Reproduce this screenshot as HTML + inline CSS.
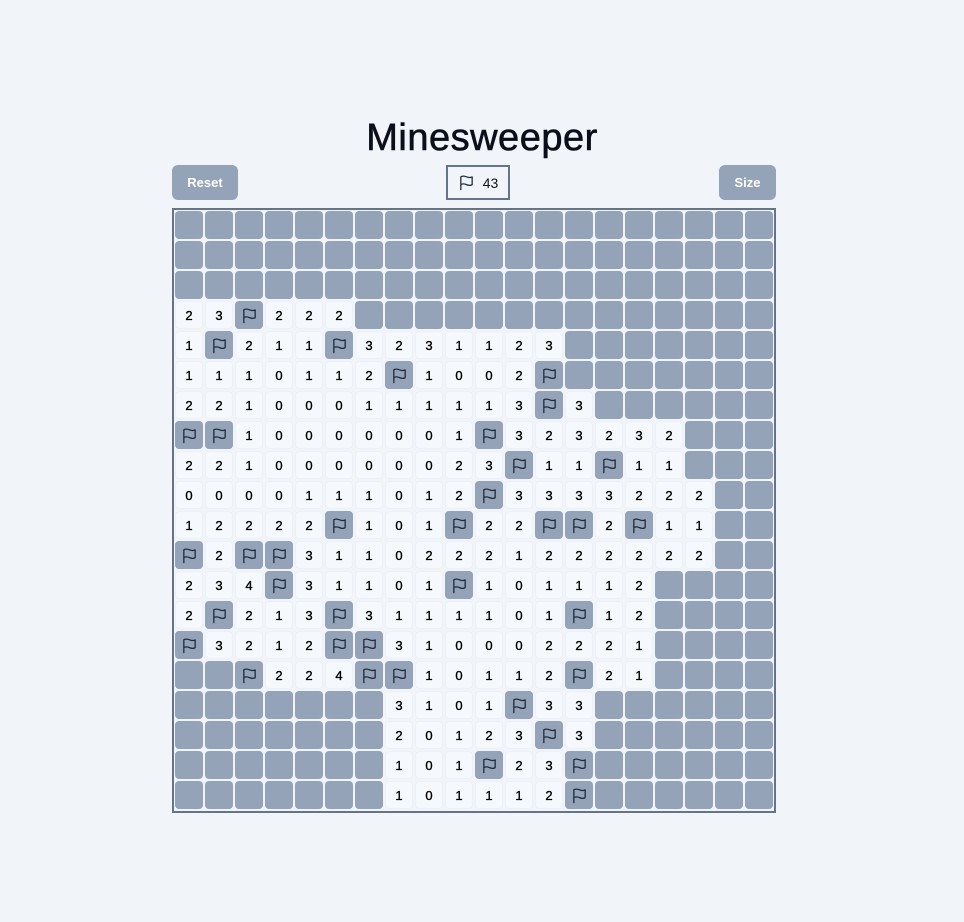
<!DOCTYPE html>
<html><head><meta charset="utf-8"><style>
body{margin:0;background:#f1f5fa;font-family:"Liberation Sans",sans-serif;width:964px;height:922px;position:relative}
h1{position:absolute;top:117px;left:0;width:964px;text-align:center;margin:0;font-size:38px;font-weight:normal;color:#0b0f19;letter-spacing:0.5px;-webkit-text-stroke:0.6px #0b0f19}
.btn{position:absolute;top:165px;height:35px;background:#94a3b8;color:#fff;border-radius:6px;font-size:13px;font-weight:bold;line-height:35px;text-align:center}
.cnt{position:absolute;left:446px;top:165px;width:60px;height:31px;border:2px solid #64748b;display:flex;align-items:center;justify-content:center;gap:8px;font-size:14px;color:#111}
.g{position:absolute;left:172px;top:208px;width:599px;height:600px;border:2px solid #64748b;padding:1px 0 0 1px;display:grid;grid-template-columns:repeat(20,28px);grid-auto-rows:28px;gap:2px}
.g i{background:#94a3b8;border-radius:4px;display:flex;align-items:center;justify-content:center}
.g b{background:#f5f8fc;border-radius:4px;font-weight:normal;font-size:13px;color:#000;-webkit-text-stroke:0.35px #000;display:flex;align-items:center;justify-content:center;box-shadow:inset 0 0 0 1px #edf1f7}
svg{width:17px;height:17px}
</style></head><body>
<svg style="display:none"><symbol id="fl" viewBox="0 0 24 24"><path d="M4 15s1-1 4-1 5 2 8 2 4-1 4-1V4s-1 1-4 1-5-2-8-2-4 1-4 1z M4 22V4" fill="none" stroke="#1e293b" stroke-width="1.8" stroke-linejoin="round" stroke-linecap="round"/></symbol></svg>
<h1>Minesweeper</h1>
<div class="btn" style="left:172px;width:66px">Reset</div>
<div class="cnt"><svg><use href="#fl"/></svg>43</div>
<div class="btn" style="left:719px;width:57px">Size</div>
<div class="g">
<i></i><i></i><i></i><i></i><i></i><i></i><i></i><i></i><i></i><i></i><i></i><i></i><i></i><i></i><i></i><i></i><i></i><i></i><i></i><i></i>
<i></i><i></i><i></i><i></i><i></i><i></i><i></i><i></i><i></i><i></i><i></i><i></i><i></i><i></i><i></i><i></i><i></i><i></i><i></i><i></i>
<i></i><i></i><i></i><i></i><i></i><i></i><i></i><i></i><i></i><i></i><i></i><i></i><i></i><i></i><i></i><i></i><i></i><i></i><i></i><i></i>
<b>2</b><b>3</b><i><svg><use href="#fl"/></svg></i><b>2</b><b>2</b><b>2</b><i></i><i></i><i></i><i></i><i></i><i></i><i></i><i></i><i></i><i></i><i></i><i></i><i></i><i></i>
<b>1</b><i><svg><use href="#fl"/></svg></i><b>2</b><b>1</b><b>1</b><i><svg><use href="#fl"/></svg></i><b>3</b><b>2</b><b>3</b><b>1</b><b>1</b><b>2</b><b>3</b><i></i><i></i><i></i><i></i><i></i><i></i><i></i>
<b>1</b><b>1</b><b>1</b><b>0</b><b>1</b><b>1</b><b>2</b><i><svg><use href="#fl"/></svg></i><b>1</b><b>0</b><b>0</b><b>2</b><i><svg><use href="#fl"/></svg></i><i></i><i></i><i></i><i></i><i></i><i></i><i></i>
<b>2</b><b>2</b><b>1</b><b>0</b><b>0</b><b>0</b><b>1</b><b>1</b><b>1</b><b>1</b><b>1</b><b>3</b><i><svg><use href="#fl"/></svg></i><b>3</b><i></i><i></i><i></i><i></i><i></i><i></i>
<i><svg><use href="#fl"/></svg></i><i><svg><use href="#fl"/></svg></i><b>1</b><b>0</b><b>0</b><b>0</b><b>0</b><b>0</b><b>0</b><b>1</b><i><svg><use href="#fl"/></svg></i><b>3</b><b>2</b><b>3</b><b>2</b><b>3</b><b>2</b><i></i><i></i><i></i>
<b>2</b><b>2</b><b>1</b><b>0</b><b>0</b><b>0</b><b>0</b><b>0</b><b>0</b><b>2</b><b>3</b><i><svg><use href="#fl"/></svg></i><b>1</b><b>1</b><i><svg><use href="#fl"/></svg></i><b>1</b><b>1</b><i></i><i></i><i></i>
<b>0</b><b>0</b><b>0</b><b>0</b><b>1</b><b>1</b><b>1</b><b>0</b><b>1</b><b>2</b><i><svg><use href="#fl"/></svg></i><b>3</b><b>3</b><b>3</b><b>3</b><b>2</b><b>2</b><b>2</b><i></i><i></i>
<b>1</b><b>2</b><b>2</b><b>2</b><b>2</b><i><svg><use href="#fl"/></svg></i><b>1</b><b>0</b><b>1</b><i><svg><use href="#fl"/></svg></i><b>2</b><b>2</b><i><svg><use href="#fl"/></svg></i><i><svg><use href="#fl"/></svg></i><b>2</b><i><svg><use href="#fl"/></svg></i><b>1</b><b>1</b><i></i><i></i>
<i><svg><use href="#fl"/></svg></i><b>2</b><i><svg><use href="#fl"/></svg></i><i><svg><use href="#fl"/></svg></i><b>3</b><b>1</b><b>1</b><b>0</b><b>2</b><b>2</b><b>2</b><b>1</b><b>2</b><b>2</b><b>2</b><b>2</b><b>2</b><b>2</b><i></i><i></i>
<b>2</b><b>3</b><b>4</b><i><svg><use href="#fl"/></svg></i><b>3</b><b>1</b><b>1</b><b>0</b><b>1</b><i><svg><use href="#fl"/></svg></i><b>1</b><b>0</b><b>1</b><b>1</b><b>1</b><b>2</b><i></i><i></i><i></i><i></i>
<b>2</b><i><svg><use href="#fl"/></svg></i><b>2</b><b>1</b><b>3</b><i><svg><use href="#fl"/></svg></i><b>3</b><b>1</b><b>1</b><b>1</b><b>1</b><b>0</b><b>1</b><i><svg><use href="#fl"/></svg></i><b>1</b><b>2</b><i></i><i></i><i></i><i></i>
<i><svg><use href="#fl"/></svg></i><b>3</b><b>2</b><b>1</b><b>2</b><i><svg><use href="#fl"/></svg></i><i><svg><use href="#fl"/></svg></i><b>3</b><b>1</b><b>0</b><b>0</b><b>0</b><b>2</b><b>2</b><b>2</b><b>1</b><i></i><i></i><i></i><i></i>
<i></i><i></i><i><svg><use href="#fl"/></svg></i><b>2</b><b>2</b><b>4</b><i><svg><use href="#fl"/></svg></i><i><svg><use href="#fl"/></svg></i><b>1</b><b>0</b><b>1</b><b>1</b><b>2</b><i><svg><use href="#fl"/></svg></i><b>2</b><b>1</b><i></i><i></i><i></i><i></i>
<i></i><i></i><i></i><i></i><i></i><i></i><i></i><b>3</b><b>1</b><b>0</b><b>1</b><i><svg><use href="#fl"/></svg></i><b>3</b><b>3</b><i></i><i></i><i></i><i></i><i></i><i></i>
<i></i><i></i><i></i><i></i><i></i><i></i><i></i><b>2</b><b>0</b><b>1</b><b>2</b><b>3</b><i><svg><use href="#fl"/></svg></i><b>3</b><i></i><i></i><i></i><i></i><i></i><i></i>
<i></i><i></i><i></i><i></i><i></i><i></i><i></i><b>1</b><b>0</b><b>1</b><i><svg><use href="#fl"/></svg></i><b>2</b><b>3</b><i><svg><use href="#fl"/></svg></i><i></i><i></i><i></i><i></i><i></i><i></i>
<i></i><i></i><i></i><i></i><i></i><i></i><i></i><b>1</b><b>0</b><b>1</b><b>1</b><b>1</b><b>2</b><i><svg><use href="#fl"/></svg></i><i></i><i></i><i></i><i></i><i></i><i></i>
</div>
</body></html>
